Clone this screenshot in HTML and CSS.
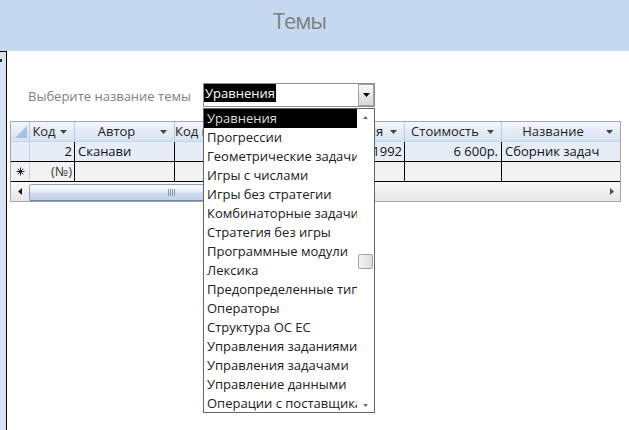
FILE: index.html
```html
<!DOCTYPE html>
<html lang="ru">
<head>
<meta charset="utf-8">
<title>Темы</title>
<link rel="stylesheet" href="styles.css">
</head>
<body>
<div class="page">
  <header class="titlebar"><h1 class="title">Темы</h1></header>
  <div class="main">
    <div class="leftbar"><span class="tick"></span></div>
    <div class="content">
      <div class="form-row">
        <label class="label">Выберите название темы</label>
        <div class="combo">
          <div class="combo-value"><span class="sel">Уравнения</span></div>
          <div class="combo-btn"><svg width="7" height="4" viewBox="0 0 7 4"><path d="M0 0H7L3.5 4Z" fill="#000"/></svg></div>
          <div class="listbox">
            <ul class="items">
              <li class="item active">Уравнения</li>
              <li class="item">Прогрессии</li>
              <li class="item">Геометрические задачи</li>
              <li class="item">Игры с числами</li>
              <li class="item">Игры без стратегии</li>
              <li class="item">Комбинаторные задачи</li>
              <li class="item">Стратегия без игры</li>
              <li class="item">Программные модули</li>
              <li class="item">Лексика</li>
              <li class="item">Предопределенные типы</li>
              <li class="item">Операторы</li>
              <li class="item">Структура ОС ЕС</li>
              <li class="item">Управления заданиями</li>
              <li class="item">Управления задачами</li>
              <li class="item">Управление данными</li>
              <li class="item">Операции с поставщиками</li>
            </ul>
            <div class="vscroll">
              <div class="vs-arrow up"><svg width="5" height="3" viewBox="0 0 5 3"><path d="M0 3H5L2.5 0Z" fill="#6d6d6d"/></svg></div>
              <div class="vs-gap"></div>
              <div class="vs-thumb"></div>
              <div class="vs-rest"></div>
              <div class="vs-arrow down"><svg width="5" height="3" viewBox="0 0 5 3"><path d="M0 0H5L2.5 3Z" fill="#6d6d6d"/></svg></div>
            </div>
          </div>
        </div>
      </div>

      <div class="datasheet">
        <div class="ds-row ds-head">
          <div class="hc corner"><svg width="19" height="19" viewBox="0 0 19 19"><path d="M4 16H16V4Z" fill="#a9c1e0"/></svg></div>
          <div class="hc"><span class="ht">Код</span><svg class="harr" width="7" height="4" viewBox="0 0 7 4"><path d="M0 0H7L3.5 4Z" fill="#444"/></svg></div>
          <div class="hc"><span class="ht">Автор</span><svg class="harr" width="7" height="4" viewBox="0 0 7 4"><path d="M0 0H7L3.5 4Z" fill="#444"/></svg></div>
          <div class="hc"><span class="ht">Код издательства</span><svg class="harr" width="7" height="4" viewBox="0 0 7 4"><path d="M0 0H7L3.5 4Z" fill="#444"/></svg></div>
          <div class="hc"><span class="ht">Год издания</span><svg class="harr" width="7" height="4" viewBox="0 0 7 4"><path d="M0 0H7L3.5 4Z" fill="#444"/></svg></div>
          <div class="hc"><span class="ht">Стоимость</span><svg class="harr" width="7" height="4" viewBox="0 0 7 4"><path d="M0 0H7L3.5 4Z" fill="#444"/></svg></div>
          <div class="hc last"><span class="ht">Название</span><svg class="harr" width="7" height="4" viewBox="0 0 7 4"><path d="M0 0H7L3.5 4Z" fill="#444"/></svg></div>
        </div>
        <div class="ds-row r1">
          <div class="dc sel-cell"></div>
          <div class="dc num">2</div>
          <div class="dc">Сканави</div>
          <div class="dc num">1</div>
          <div class="dc num">1992</div>
          <div class="dc num money">6 600р.</div>
          <div class="dc last">Сборник задач</div>
        </div>
        <div class="ds-row r2">
          <div class="dc sel-cell star"><svg width="9" height="9" viewBox="0 0 9 9"><path d="M4.5 0.5V8.5M0.5 4.5H8.5M1.7 1.7L7.3 7.3M7.3 1.7L1.7 7.3" stroke="#222" stroke-width="1"/></svg></div>
          <div class="dc num new">(№)</div>
          <div class="dc"></div>
          <div class="dc"></div>
          <div class="dc"></div>
          <div class="dc"></div>
          <div class="dc last"></div>
        </div>
        <div class="hscroll">
          <div class="hs-btn"><svg width="4" height="7" viewBox="0 0 4 7"><path d="M4 0V7L0 3.5Z" fill="#1a1a1a"/></svg></div>
          <div class="hs-thumb"><span class="grip"></span><span class="grip"></span><span class="grip"></span><span class="grip"></span></div>
          <div class="hs-track"></div>
          <div class="hs-btn"><svg width="4" height="7" viewBox="0 0 4 7"><path d="M0 0V7L4 3.5Z" fill="#505050"/></svg></div>
        </div>
      </div>
    </div>
  </div>
</div>
</body>
</html>
```

FILE: styles.css
```css
* { box-sizing: border-box; margin: 0; padding: 0; }
html, body { width: 629px; height: 430px; overflow: hidden; background: #fff; }
body {
  font-family: "Open Sans", "Noto Sans", "DejaVu Sans", sans-serif;
  font-size: 13px;
  color: #1e1e1e;
}
.page { display: flex; flex-direction: column; height: 430px; }

.titlebar { flex: none; height: 51px; background: #c6d9f1; padding: 5px 0 0 273px; }
.title { font-size: 22px; font-weight: 400; color: #7f7f7f; line-height: 30px; letter-spacing: -1.1px; }

.main { flex: 1; display: flex; }
.leftbar { flex: none; width: 7px; background: #d6e3f3; border-right: 1px solid #000; border-top: 1px solid #000; padding-top: 7px; }
.tick { display: block; width: 2px; height: 3px; background: #333; }
.content { flex: 1; padding-top: 32px; }

.form-row { display: flex; align-items: center; height: 24px; padding-left: 21px; }
.label { width: 175px; color: #7f7f7f; line-height: 18px; padding-top: 1px; }

.combo { position: relative; display: flex; width: 172px; height: 24px; border: 1px solid #8e8e8e; background: #fff; }
.combo-value { flex: 1; height: 18px; line-height: 18px; overflow: hidden; }
.sel { display: inline-block; background: #000; color: #fff; padding: 0 1px 0 1px; }
.combo-btn { flex: none; width: 16px; height: 22px; border: 1px solid #a3a3a3; background: linear-gradient(#fafafa, #e6e6e6 50%, #d9d9d9); display: flex; align-items: center; justify-content: center; }
.combo-btn svg { display: block; }

.listbox { position: absolute; left: -1px; top: 24px; z-index: 5; width: 172px; height: 305px; border: 1px solid #646464; background: #fff; display: flex; overflow: hidden; }
.items { flex: none; width: 153px; list-style: none; overflow: hidden; }
.item { height: 19px; line-height: 19px; padding-left: 3px; white-space: nowrap; overflow: hidden; color: #202020; }
.item.active { background: #000; color: #dcdcdc; }

.vscroll { flex: none; width: 17px; display: flex; flex-direction: column; background: #fff; }
.vs-arrow { flex: none; height: 17px; display: flex; align-items: center; justify-content: center; }
.vs-arrow svg { display: block; }
.vs-arrow.down { padding-top: 4px; }
.vs-gap { flex: none; height: 128px; }
.vs-thumb { flex: none; height: 15px; margin: 0 1px; border: 1px solid #a2a2a2; border-radius: 2px; background: linear-gradient(90deg, #f4f4f4, #e9e9e9 50%, #dcdcdc); }
.vs-rest { flex: 1; }

.datasheet { margin: 14px 0 0 3px; width: 611px; border: 1px solid #a5a5a5; background: #fff; }
.ds-row { display: grid; grid-template-columns: 19px 45px 100px 125px 105px 97px 118px; }

.ds-head { border-bottom: 1px solid #c4d3e7; }
.hc { height: 19px; display: flex; align-items: center; border-right: 1px solid #b7cbe4; background: linear-gradient(#f4f7fc, #e3ebf6 55%, #d7e3f2); overflow: hidden; }
.hc.last { border-right: none; }
.hc.corner { display: block; }
.hc.corner svg { display: block; }
.ht { flex: 1; text-align: center; white-space: nowrap; overflow: hidden; line-height: 19px; color: #1e1e1e; }
.harr { flex: none; display: block; margin: 0 7px 0 2px; }

.dc { height: 19px; line-height: 19px; padding: 0 3px; white-space: nowrap; overflow: hidden; border-right: 1px solid #000; color: #111; }
.dc.last { border-right: none; }
.dc.num { text-align: right; padding-right: 2px; }
.dc.money { padding-right: 3px; }
.dc.sel-cell { border-right: 1px solid #c3d1e4; padding: 0; }
.r1 { border-bottom: 1px solid #000; background: #e6edf7; }
.r2 { border-bottom: 1px solid #000; background: #f2f2f2; }
.star { display: flex; align-items: center; justify-content: center; }
.star svg { display: block; }
.dc.new { color: #3a3a3a; }

.hscroll { display: flex; height: 19px; background: linear-gradient(#f9f9f9, #efefef 50%, #e6e6e6); }
.hs-btn { flex: none; width: 17px; display: flex; align-items: center; justify-content: center; }
.hs-btn svg { display: block; }
.hs-thumb { flex: none; width: 284px; margin: 2px 0 0 1px; border: 1px solid #8ea3c4; border-bottom-color: #6f86ad; border-radius: 2px; background: linear-gradient(#fdfeff, #e6edf7 45%, #cfdbec 55%, #c3d2e8); display: flex; align-items: center; justify-content: center; gap: 1px; }
.grip { display: block; width: 1px; height: 7px; background: #8797b2; }
.hs-track { flex: 1; }
```
